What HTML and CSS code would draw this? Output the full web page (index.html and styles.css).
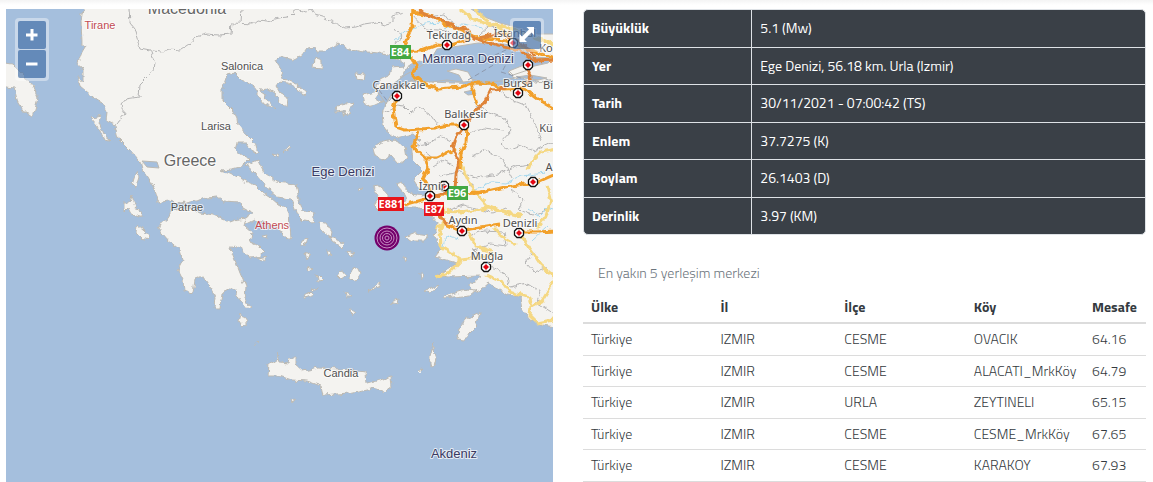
FILE: index.html
```
<!DOCTYPE html>
<html lang="tr">
<head>
    <meta charset="UTF-8">
    <meta name="viewport" content="width=device-width, initial-scale=1.0">
    <title>Deprem Detayı</title>
    <link rel="stylesheet" href="styles.css">
</head>
<body>
    <main class="page">
        <!-- Harita -->
        <section class="map">
            <svg class="map-canvas" viewBox="6 9 547 473" role="img" aria-label="Ege Denizi haritası">
                <defs>
                    <filter id="coast" filterUnits="userSpaceOnUse" x="0" y="0" width="560" height="490">
                        <feTurbulence type="fractalNoise" baseFrequency="0.16" numOctaves="2" seed="4" result="noise"/>
                        <feDisplacementMap in="SourceGraphic" in2="noise" scale="6" xChannelSelector="R" yChannelSelector="G"/>
                    </filter>
                    <g id="town">
                        <path d="M-2-4.500H2L4.500-2V2L2 4.500H-2L-4.500 2V-2Z" fill="#fff" stroke="#111" stroke-width="1.300"/>
                        <path d="M0-3L3 0 0 3-3 0Z" fill="#e30613"/>
                    </g>
                </defs>
                <rect x="6" y="9" width="547" height="473" fill="#a5bfdd"/>

                <!-- Kara parçaları -->
                <g class="land" filter="url(#coast)">
                    <path d="M84-5L83 9 81 22 82 43 85 47 82 52 78 63 83 71 83 83 77 75 80 86 93 97 103 104 107 112 106 121 115 125 118 138 128 148 140 161 142 169 148 178 155 190 158 202 167 200 172 202 181 204 190 202 199 200 207 198 217 197 223 202 240 203 243 208 252 213 247 217 240 218 244 225 254 220 263 222 277 227 288 240 291 238 289 212 277 203 270 197 262 192 255 185 243 180 230 173 220 170 232 169 240 167 245 163 250 158 245 156 240 154 235 150 237 143 247 143 253 152 258 153 255 143 247 135 238 125 237 118 233 110 223 100 223 87 227 75 235 73 242 80 258 90 258 96 263 103 275 109 265 98 261 89 267 88 275 93 280 102 287 107 288 98 280 92 276 85 278 82 288 83 297 88 303 95 307 94 298 86 290 80 280 79 283 72 278 65 275 60 280 57 292 60 302 55 307 48 315 47 317 52 325 52 338 43 350 50 365 52 380 53 393 57 405 63 404 66 392 67 390 75 380 80 376 89 398 84 407 81 500 85 560 80 560 328 543 325 530 320 522 310 520 297 507 295 488 283 480 290 473 293 470 285 482 276 447 277 437 275 457 263 435 257 442 248 435 238 437 223 430 215 420 208 393 208 395 202 407 200 403 192 396 184 402 182 410 193 423 195 430 193 418 188 413 180 423 170 413 160 412 152 412 143 420 140 413 134 396 138 385 129 383 115 387 100 395 94 398 84 405 70 420 60 560 85V-5Z"/>
                    <path d="M172 209L167 220 157 227 168 240 180 250 183 260 178 270 183 280 184 290 193 293 195 280 203 277 210 287 215 297 214 308 220 308 222 293 233 288 240 300 248 310 251 308 245 297 246 287 240 273 235 260 230 248 235 245 247 253 250 258 258 257 265 252 260 247 250 242 252 233 244 226 246 218 238 219 230 222 213 215 200 213 190 208Z"/>
                    <path d="M246 165L258 160 264 172 276 182 296 184 299 200 303 211 315 212 313 222 304 221 297 214 291 199 277 197 270 191 262 181 255 173Z"/>
                    <path d="M0 62L12 64 25 77 34 88 38 98 33 116 25 113 18 103 14 88 0 86Z"/>
                    <path d="M91 118L102 116 99 122 104 134 111 140 104 139 97 125Z"/>
                    <path d="M136 171L139 177 136 187 132 184Z"/>
                    <path d="M132 196L136 207 143 217 131 214 128 208 124 212 124 202 130 202Z"/>
                    <path d="M137 225L150 236 144 240 136 232Z"/>
                    <path d="M320 222L326 223 332 232 331 237 321 230Z"/>
                    <path d="M330 237L344 243 342 248 333 242Z"/>
                    <path d="M302 241L307 239 305 245 301 247Z"/>
                    <path d="M305 252L310 255 307 261Z"/>
                    <path d="M308 267L313 269 309 271Z"/>
                    <path d="M328 250L331 254 329 257Z"/>
                    <path d="M351 270L358 267 361 273 356 281 350 279Z"/>
                    <path d="M341 271L346 274 342 280 338 276Z"/>
                    <path d="M317 275L323 281 318 282Z"/>
                    <path d="M303 295L311 292 314 295 305 298Z"/>
                    <path d="M312 290L319 288 314 292Z"/>
                    <path d="M345 291L352 297 346 297Z"/>
                    <path d="M347 251L356 253 349 256Z"/>
                    <path d="M368 291L381 283 379 288Z"/>
                    <path d="M351 309L356 313 352 316Z"/>
                    <path d="M262 236L267 235 266 239Z"/>
                    <path d="M257 259L267 257 262 261Z"/>
                    <path d="M241 313L247 322 243 327 239 321Z"/>
                    <path d="M314 58L322 61 322 69 313 68Z"/>
                    <path d="M355 73L364 74 363 80 356 79Z"/>
                    <path d="M364 95L375 92 379 88 380 92 376 98 383 102 366 106Z"/>
                    <path d="M337 106L346 104 353 102 350 112 345 116 343 111 336 112Z"/>
                    <path d="M272 154L279 156 276 158Z"/>
                    <path d="M283 152L289 145 290 148Z"/>
                    <path d="M373 149L383 142 393 140 405 146 407 158 399 164 391 155 385 160 375 156Z"/>
                    <path d="M373 187L380 186 388 195 388 207 381 212 374 205 378 198Z"/>
                    <path d="M358 187L362 188 359 190Z"/>
                    <path d="M405 237L415 233 429 235 425 241 411 241Z"/>
                    <path d="M424 291L436 285 439 286 429 293Z"/>
                    <path d="M391 302L399 299 398 304Z"/>
                    <path d="M403 258L407 257 405 262Z"/>
                    <path d="M420 273L424 276 421 280Z"/>
                    <path d="M444 296L466 290 475 291 470 295 445 298Z"/>
                    <path d="M480 312L477 325 469 333 464 341 457 340 459 328 467 319Z"/>
                    <path d="M434 342L433 350 436 359 434 367 430 366 430 356Z"/>
                    <path d="M418 370L424 368 420 372Z"/>
                    <path d="M268 376L269 363 271 361 276 363 277 353 279 362 289 363 290 358 296 358 296 365 303 371 318 368 340 369 366 372 367 384 374 382 383 379 391 376 392 388 384 391 372 388 349 393 323 395 321 386 307 381 292 380 279 376Z"/>
                    <path d="M291 398L295 400 292 402Z"/>
                    <path d="M256 342L258 343 257 344Z"/>
                </g>

                <!-- Marmara, Karadeniz ve göller -->
                <g class="water">
                    <path d="M377 91L393 84 405 75 418 68 431 59 437 49 453 47 478 43 503 44 516 46 527 51 531 57 552 58 548 63 530 67 515 70 508 72 514 78 502 81 484 82 471 79 463 82 447 80 431 82 412 80 401 88 391 95 386 104Z"/>
                    <path d="M465 5L482 16 500 23 520 28 538 34 560 34V5Z"/>
                    <path d="M464 92L473 90 476 94 468 95Z"/>
                    <path d="M517 77L530 75 547 78 538 80Z"/>
                    <path d="M142 161L157 162 159 168 147 167Z"/>
                    <path d="M469 185L473 184 473 187Z"/>
                </g>
                <g class="land">
                    <path d="M447 71L456 69 468 72 473 81 463 82 459 75Z"/>
                    <path d="M509 71L529 63 528 70 513 75Z"/>
                </g>
                <path class="ferry" d="M468 80L502 60M480 62L508 49M503 70L516 45M501 72L524 79M379 90L388 102 394 95"/>

                <!-- Sınırlar -->
                <g class="border-line" filter="url(#coast)">
                    <path d="M129 9L130 23 134 28 137 38 140 48 150 50 155 63 154 71 148 76 140 84 139 97 126 99 121 105 125 114 117 124"/>
                    <path d="M152 51L162 52 169 49 181 50 190 44 196 37 207 34 219 35 231 34 232 23 253 24 258 20 267 21 278 18 288 17 293 12 299 10 306 12 311 9 315 15 325 18 334 22 345 28 356 27 364 24 377 22 386 25 393 23 393 15 403 12"/>
                    <path d="M242 9L241 23"/>
                    <path d="M385 112L396 105 404 106 411 113 418 107 430 114 437 125"/>
                    <path d="M395 28L402 37 395 45M411 13L426 29 448 31 459 43"/>
                    <path d="M425 16L445 14 456 29 471 32M478 36L490 25 502 34"/>
                    <path d="M416 145L430 143 440 136 450 141M424 151L435 160 450 152"/>
                    <path d="M474 103L488 112 505 118 511 131 500 143 508 150 521 145 534 151 553 142"/>
                    <path d="M495 88L511 99 526 105 534 123 541 139"/>
                    <path d="M467 134L484 128 505 130M471 157L485 150 503 160 512 178"/>
                    <path d="M440 176L459 172 476 178 498 174 516 166 531 164"/>
                    <path d="M469 236L483 231 504 232 506 246 490 244 473 250 482 260"/>
                    <path d="M490 266L506 275 511 287 527 283 540 291 537 303 553 313"/>
                    <path d="M535 251L526 262 535 272 547 267M511 190L524 200 519 210 533 215 547 210"/>
                    <path d="M444 212L464 205 493 213 505 208M433 166L442 160 453 165"/>
                </g>
                <g class="river" filter="url(#coast)">
                    <path d="M395 41L405 32 425 24 441 23M444 28L462 24 484 28"/>
                    <path d="M476 190L491 182 506 183 521 176 546 173M443 247L446 235 458 239"/>
                    <path d="M528 208L539 216 547 208 553 210M532 240L547 226"/>
                </g>

                <!-- Yollar -->
                <g filter="url(#coast)">
                    <g class="road minor">
                        <path d="M460 9L472 19 487 24 506 27 520 32 558 46M475 9L486 20 510 35"/>
                        <path d="M558 149L541 152 531 162 528 170"/>
                        <path d="M459 160L467 178 475 192 487 205 504 212 520 214"/>
                        <path d="M438 211L461 212 487 208 502 211 520 216M436 228L445 222 440 231 441 247 461 260 485 257 493 252 476 246 468 232"/>
                        <path d="M461 260L450 272 436 277M487 275L503 282 510 292 530 298 532 306 542 301 558 275"/>
                        <path d="M521 235L533 253 541 265 558 280M494 228L502 237 517 245M547 185L551 200 546 216 537 228M530 307L529 315 537 323 558 319"/>
                    </g>
                    <g class="road major">
                        <path d="M413 5L412 27 405 43 410 57 417 66 412 75 426 85 438 89 461 87 471 83 491 83 503 90 525 89 538 99 558 111"/>
                        <path d="M391 52L421 51 437 45 448 46 470 38"/>
                        <path d="M412 12L430 15 444 24 460 29 476 37 504 40 533 51 558 60"/>
                        <path d="M396 98L393 108 396 127 405 130 434 128 449 125 464 125"/>
                        <path d="M471 83L474 93 477 105M456 149L437 158 425 158 413 147 419 131"/>
                        <path d="M467 125L466 142 461 154 460 170M426 160L428 168 423 178 429 188 432 197"/>
                        <path d="M404 205L422 200 432 196 447 195 479 193 505 187 538 182 558 173"/>
                        <path d="M438 211L447 225 461 231 480 227 500 224M519 232L536 232 558 231"/>
                    </g>
                    <g class="road highway">
                        <path d="M414 5L424 14 437 18 455 27 466 29 474 38 499 46 520 50 536 61 558 60"/>
                        <path d="M506 89L491 90 485 103 474 111 465 125 456 138 453 149 459 161 456 175 455 190"/>
                        <path d="M432 197L447 193 455 190M437 211L447 225"/>
                        <path d="M479 38L500 33 520 42 535 56"/>
                        <path d="M527 69L531 78 524 84"/>
                    </g>
                </g>

                <!-- Yol numaraları -->
                <g class="shield">
                    <rect x="390" y="45" width="21" height="14" fill="#43a843"/><text x="400" y="56">E84</text>
                    <rect x="447" y="186" width="21" height="14" fill="#43a843"/><text x="457" y="197">E96</text>
                    <rect x="378" y="197" width="26" height="14" fill="#e8151b"/><text x="391" y="208">E881</text>
                    <rect x="424" y="202" width="20" height="14" fill="#e8151b"/><text x="434" y="213">E87</text>
                </g>

                <!-- Şehirler -->
                <use href="#town" x="447" y="45"/>
                <use href="#town" x="513" y="43"/>
                <use href="#town" x="528" y="65"/>
                <use href="#town" x="397" y="96"/>
                <use href="#town" x="518" y="93"/>
                <use href="#town" x="464" y="125"/>
                <use href="#town" x="444" y="186"/>
                <use href="#town" x="430" y="196"/>
                <use href="#town" x="533" y="182"/>
                <use href="#town" x="462" y="231"/>
                <use href="#town" x="519" y="233"/>
                <use href="#town" x="486" y="267"/>
                <g class="label">
                    <text class="country" x="187" y="14">Macedonia</text>
                    <text class="country" x="190" y="166">Greece</text>
                    <text class="capital" x="100" y="29">Tirane</text>
                    <text class="capital" x="272" y="229">Athens</text>
                    <text x="242" y="70">Salonica</text>
                    <text x="216" y="130">Larisa</text>
                    <text x="187" y="211">Patrae</text>
                    <text x="341" y="377">Candia</text>
                    <text class="sea" x="343" y="176">Ege Denizi</text>
                    <text class="sea" x="454" y="458">Akdeniz</text>
                    <text class="sea" x="468" y="63">Marmara Denizi</text>
                    <g class="city">
                        <text x="449" y="39">Tekirdağ</text>
                        <text x="515" y="37">İstanbul</text>
                        <text x="399" y="89">Çanakkale</text>
                        <text x="518" y="87">Bursa</text>
                        <text x="466" y="118">Balıkesir</text>
                        <text x="432" y="190">İzmir</text>
                        <text x="463" y="224">Aydın</text>
                        <text x="520" y="227">Denizli</text>
                        <text x="487" y="260">Muğla</text>
                        <text x="546" y="52">Ko</text>
                        <text x="548" y="89">Bi</text>
                        <text x="546" y="132">Kü</text>
                        <text x="549" y="171">A</text>
                    </g>
                </g>

                <!-- Deprem merkezi -->
                <g class="epicenter">
                    <circle cx="387" cy="238" r="12.500"/>
                    <circle cx="387" cy="238" r="10"/>
                    <circle cx="387" cy="238" r="7"/>
                    <circle cx="387" cy="238" r="4.500"/>
                    <circle cx="387" cy="238" r="2"/>
                </g>
            </svg>

            <div class="map-control zoom">
                <button type="button" aria-label="Yakınlaştır">
                    <svg viewBox="0 0 28 28"><path d="M14 8V19.500M8 14H19.500"/></svg>
                </button>
                <button type="button" aria-label="Uzaklaştır">
                    <svg viewBox="0 0 28 28"><path d="M8 14H19.500"/></svg>
                </button>
            </div>
            <div class="map-control fullscreen">
                <button type="button" aria-label="Tam ekran">
                    <svg viewBox="0 0 28 28"><path class="arrow" d="M21 6V14L18.500 11.500 11.500 18.500 14 21H6.500V13L9 15.500 16 8.500 13.500 6Z"/></svg>
                </button>
            </div>
        </section>

        <!-- Deprem bilgileri -->
        <section class="details">
            <table class="info">
                <tr><th scope="row">Büyüklük</th><td>5.1 (Mw)</td></tr>
                <tr><th scope="row">Yer</th><td>Ege Denizi, 56.18 km. Urla (Izmir)</td></tr>
                <tr><th scope="row">Tarih</th><td>30/11/2021 - 07:00:42 (TS)</td></tr>
                <tr><th scope="row">Enlem</th><td>37.7275 (K)</td></tr>
                <tr><th scope="row">Boylam</th><td>26.1403 (D)</td></tr>
                <tr><th scope="row">Derinlik</th><td>3.97 (KM)</td></tr>
            </table>

            <table class="places">
                <caption>En yakın 5 yerleşim merkezi</caption>
                <thead>
                    <tr><th>Ülke</th><th>İl</th><th>İlçe</th><th>Köy</th><th>Mesafe</th></tr>
                </thead>
                <tbody>
                    <tr><td>Türkiye</td><td>IZMIR</td><td>CESME</td><td>OVACIK</td><td>64.16</td></tr>
                    <tr><td>Türkiye</td><td>IZMIR</td><td>CESME</td><td>ALACATI_MrkKöy</td><td>64.79</td></tr>
                    <tr><td>Türkiye</td><td>IZMIR</td><td>URLA</td><td>ZEYTINELI</td><td>65.15</td></tr>
                    <tr><td>Türkiye</td><td>IZMIR</td><td>CESME</td><td>CESME_MrkKöy</td><td>67.65</td></tr>
                    <tr><td>Türkiye</td><td>IZMIR</td><td>CESME</td><td>KARAKOY</td><td>67.93</td></tr>
                </tbody>
            </table>
        </section>
    </main>
</body>
</html>
```
FILE: styles.css
```
* {
    box-sizing: border-box;
}
body {
    margin: 0;
    font-family: "Titillium Web", Roboto, sans-serif;
    font-size: 15px;
    line-height: 1.5em;
    color: #343a40;
    background: linear-gradient(#f4f4f4, #ffffff 5px) no-repeat #ffffff;
}
.page {
    display: grid;
    grid-template-columns: 547fr 563fr;
    gap: 30px;
    align-items: start;
    padding: 9px 7px 0 6px;
}

/* Harita */
.map {
    position: relative;
}
.map-canvas {
    display: block;
    width: 100%;
}
.land path {
    fill: #f4f3f0;
    stroke: #bcb9b2;
}
.water path {
    fill: #a5bfdd;
    stroke: #bcb9b2;
}
.border-line {
    fill: none;
    stroke: #b4b4b4;
}
.ferry {
    fill: none;
    stroke: #8d99ae;
    stroke-dasharray: 5 3;
}
.river {
    fill: none;
    stroke: #a5d8ee;
}
.road {
    fill: none;
    stroke-linejoin: round;
}
.minor {
    stroke: #f5d883;
    stroke-width: 3;
}
.major {
    stroke: #f2a02c;
    stroke-width: 3;
}
.highway {
    stroke: #df8438;
    stroke-width: 3;
}
.shield text {
    font: bold 11px "Noto Sans", sans-serif;
    fill: #ffffff;
    text-anchor: middle;
}
.label text {
    font-family: "Liberation Sans", Arial, sans-serif;
    font-size: 11px;
    fill: #505050;
    text-anchor: middle;
    stroke: #ffffff;
    stroke-width: 2px;
    stroke-opacity: 0.7;
    stroke-linejoin: round;
    paint-order: stroke;
}
.label .country {
    font-size: 16px;
    fill: #666666;
}
.label .capital {
    fill: #c24a52;
}
.label .sea {
    font-size: 13px;
    fill: #3a3a62;
}
.label .city text {
    font-family: "Noto Sans", sans-serif;
}
.epicenter circle {
    stroke: #c68fc3;
    fill: none;
}
.epicenter circle:first-child {
    fill: #73006b;
    stroke: none;
}

/* Harita düğmeleri */
.map-control {
    position: absolute;
    top: 9px;
    padding: 3px;
    display: grid;
    gap: 1px;
    border-radius: 4px;
    background-color: rgba(255, 255, 255, 0.4);
}
.zoom {
    left: 9px;
}
.fullscreen {
    right: 9px;
}
.map-control button {
    display: block;
    width: 28px;
    height: 28px;
    padding: 0;
    border: none;
    border-radius: 2px;
    background-color: rgba(0, 60, 136, 0.5);
    cursor: pointer;
}
.map-control button:hover {
    background-color: rgba(0, 60, 136, 0.7);
}
.map-control svg {
    display: block;
    fill: none;
    stroke: #ffffff;
    stroke-width: 3;
}
.map-control .arrow {
    fill: #ffffff;
    stroke: none;
}

/* Tablolar */
table {
    width: 100%;
    border-spacing: 0;
    text-align: left;
    font-size: 14px;
}
th, td {
    padding: 4px 8px;
}
.info {
    border: 1px solid #dee2e6;
    border-radius: 5px;
    overflow: hidden;
    background-color: #3a4047;
    color: #ffffff;
}
.info th, .info td {
    padding: 7px 8px;
}
.info th {
    width: 30%;
    border-right: 1px solid #dee2e6;
}
.info tr + tr > * {
    border-top: 1px solid #dee2e6;
}
.places {
    margin-top: 27px;
    table-layout: fixed;
}
.places caption {
    padding: 0 15px 7px;
    text-align: left;
    font-weight: 300;
    color: #6c757d;
}
.places th {
    width: 23%;
    border-bottom: 2px solid #dcdcdc;
}
.places th:nth-child(2) {
    width: 22%;
}
.places th:nth-child(4) {
    width: 21%;
}
.places th:last-child {
    width: 11%;
}
.places td {
    border-bottom: 1px solid #dcdcdc;
    font-weight: 300;
}
```
